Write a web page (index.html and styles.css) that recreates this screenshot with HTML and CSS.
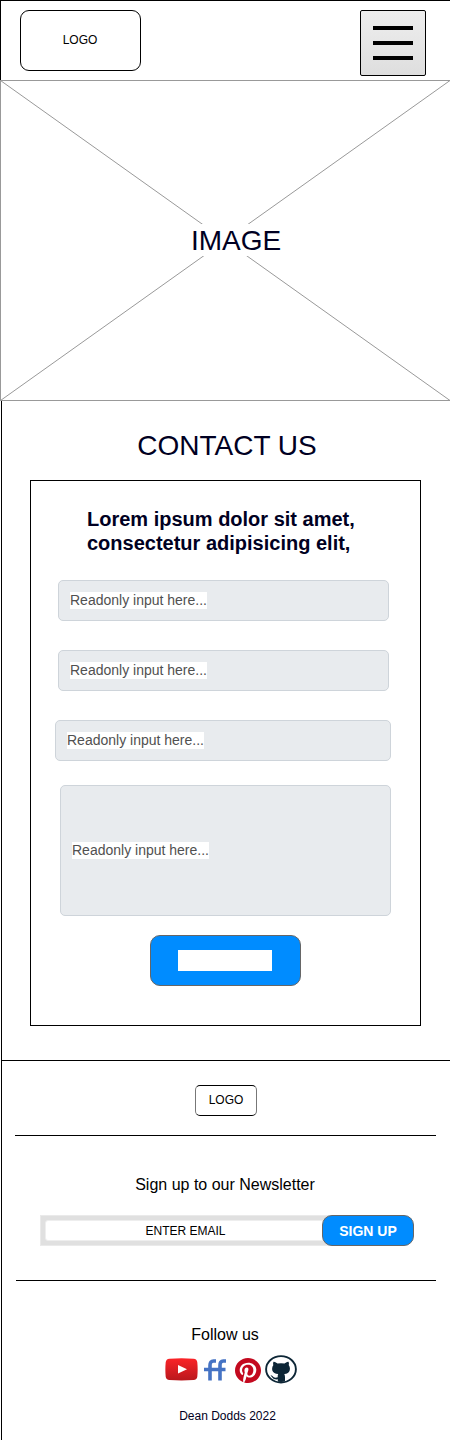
FILE: index.html
```html
<!DOCTYPE html>
<html lang="en">
<head>
<meta charset="utf-8">
<title>Contact us</title>
<link rel="stylesheet" href="styles.css">
</head>
<body>
<header class="header">
  <div class="logo">LOGO</div>
  <button class="menu" aria-label="Menu"><span class="bar"></span><span class="bar"></span><span class="bar"></span></button>
</header>
<section class="hero">
  <svg class="hero-lines" viewBox="0 0 450 321"><path d="M.5 .5 450 320.5M450 .5 .5 320.5" fill="none" stroke="#999"/></svg>
  <span class="hero-label">IMAGE</span>
</section>
<main class="main">
  <h1 class="title">CONTACT US</h1>
  <form class="card">
    <h2 class="lead">Lorem ipsum dolor sit amet,<br>consectetur adipisicing elit,</h2>
    <div class="field"><span class="hint">Readonly input here...</span></div>
    <div class="field"><span class="hint">Readonly input here...</span></div>
    <div class="field field-wide"><span class="hint">Readonly input here...</span></div>
    <div class="field field-tall"><span class="hint">Readonly input here...</span></div>
    <button type="button" class="submit" aria-label="Submit"><span class="submit-label"></span></button>
  </form>
</main>
<footer class="footer">
  <div class="footer-logo">LOGO</div>
  <hr class="rule">
  <p class="newsletter">Sign up to our Newsletter</p>
  <div class="signup">
    <div class="email"><span class="email-inner">ENTER EMAIL</span></div>
    <button type="button" class="signup-btn">SIGN UP</button>
  </div>
  <hr class="rule rule-second">
  <p class="follow">Follow us</p>
  <div class="social">
    <svg class="youtube" width="33" height="23" viewBox="0 0 33 24" preserveAspectRatio="none">
      <defs><linearGradient id="red" x2="0" y2="1"><stop stop-color="#fb2428"/><stop offset="1" stop-color="#b9171d"/></linearGradient></defs>
      <path d="M4.500.7Q16.500 -.3 28.500.7Q32 1 32.300 4.500Q33 12 32.300 19.500Q32 22.500 28.500 22.900Q16.500 23.800 4.500 22.900Q1 22.500.700 19.500Q0 12 .700 4.500Q1 1 4.500.700Z" fill="url(#red)"/>
      <path d="M13 7.200 22 11.800 13 16.200Z" fill="#fff"/>
    </svg>
    <svg class="friendfeed" width="22" height="22" viewBox="0 0 22 22">
      <path d="M6 21.500V6.300Q6 2 9.500 2H12M16 21.500V6.300Q16 2 19.200 2H22M0 10.500H21.500" fill="none" stroke="#4573c4" stroke-width="3.600"/>
    </svg>
    <svg class="pinterest" width="26" height="25" viewBox="0 0 24 24" preserveAspectRatio="none">
      <circle cx="12" cy="12" r="11.500" fill="#fff"/>
      <path d="M12 0C5.370 0 0 5.370 0 12c0 5.080 3.160 9.430 7.630 11.180-.1-.95-.2-2.400.04-3.440.22-.94 1.400-5.960 1.400-5.960s-.36-.72-.36-1.780c0-1.660.97-2.910 2.170-2.910 1.020 0 1.520.77 1.520 1.690 0 1.030-.66 2.570-1 3.990-.28 1.190.6 2.170 1.780 2.170 2.130 0 3.770-2.250 3.770-5.500 0-2.870-2.060-4.880-5.010-4.880-3.410 0-5.410 2.560-5.410 5.200 0 1.030.4 2.130.89 2.730.1.120.11.220.08.340l-.33 1.360c-.05.220-.17.270-.4.160-1.500-.7-2.430-2.890-2.430-4.650 0-3.780 2.750-7.260 7.930-7.260 4.160 0 7.400 2.970 7.400 6.930 0 4.140-2.610 7.460-6.230 7.460-1.220 0-2.360-.63-2.750-1.380l-.75 2.850c-.27 1.040-1 2.350-1.490 3.150C9.570 23.810 10.760 24 12 24c6.630 0 12-5.370 12-12S18.630 0 12 0Z" fill="#c3091f"/>
    </svg>
    <svg class="github" width="32" height="29" viewBox="0 0 32 29">
      <clipPath id="disc"><ellipse cx="16" cy="14.300" rx="14.500" ry="12.800"/></clipPath>
      <ellipse cx="16" cy="14.300" rx="14.900" ry="13.200" fill="#fff" stroke="#0d2636" stroke-width="1.900"/>
      <path clip-path="url(#disc)" d="M8.500 6.800Q9.500 6.200 12.500 8.500Q16 7.800 19.500 8.500Q22.500 6.200 23.500 6.800Q24.300 8.800 23.700 10Q25.600 12.500 24.600 15.800Q23.700 18.800 19.300 19.100Q20 20.500 20 22V29H12.800V24.300Q8.600 24.800 7 22.200L5.500 20.300Q7 20 8.500 22Q10 23.100 12.800 22.300Q12.500 20.600 13.200 19.100Q8.500 18.800 7.400 15.800Q6.500 12.500 8.400 10Q7.700 8.800 8.500 6.800Z" fill="#0d2636"/>
    </svg>
  </div>
  <p class="credit">Dean Dodds 2022</p>
</footer>
</body>
</html>
```
FILE: styles.css
```css
* { box-sizing: border-box; }
body {
  margin: 0;
  width: 450px;
  height: 1440px;
  overflow: hidden;
  background: #fff;
  color: #000;
  font: 12px/14px "Liberation Sans", Arial, sans-serif;
}
h1, h2, p { margin: 0; font-weight: normal; }
button { font-family: inherit; padding: 0; }

.header {
  display: flex;
  justify-content: space-between;
  height: 80px;
  padding: 9px 24px 0 19px;
  border-top: 1px solid #000;
  border-left: 1px solid #000;
}
.logo {
  display: flex;
  align-items: center;
  justify-content: center;
  width: 121px;
  height: 61px;
  padding: 0 1px 2px 0;
  border: 1px solid #000;
  border-radius: 9px;
}
.menu {
  display: flex;
  flex-direction: column;
  align-items: center;
  gap: 11px;
  width: 66px;
  height: 66px;
  padding-top: 15px;
  border: 1px solid #000;
  border-radius: 2px;
  background: linear-gradient(#eee, #dedede);
}
.bar { width: 40px; height: 4px; background: #000; }

.hero {
  position: relative;
  display: flex;
  justify-content: center;
  height: 321px;
  padding: 143px 0 0 21px;
  border: 1px solid #999;
  border-right: 0;
}
.hero-lines { position: absolute; left: -1px; top: -1px; width: 450px; height: 321px; }
.hero-label {
  position: relative;
  height: 32px;
  background: #fff;
  color: #000022;
  font-size: 28px;
  line-height: 34px;
}

.main {
  height: 659px;
  margin-left: 1px;
  padding: 28px 29px 0 28px;
  border-left: 1px solid #000;
}
.title {
  height: 32px;
  margin-bottom: 19px;
  padding-left: 3px;
  color: #000022;
  font-size: 28px;
  line-height: 34px;
  text-align: center;
}
.card {
  display: flex;
  flex-direction: column;
  width: 391px;
  height: 546px;
  padding: 26px 27px 0;
  border: 1px solid #000;
}
.lead {
  margin: 0 0 25px 29px;
  color: #000022;
  font-size: 20px;
  font-weight: bold;
  line-height: 24px;
}
.field {
  display: flex;
  flex: none;
  align-items: center;
  width: 331px;
  height: 41px;
  margin-bottom: 29px;
  padding-left: 11px;
  border: 1px solid #ced4da;
  border-radius: 5px;
  background: #e8ebee;
}
.field-wide { width: 336px; margin: 0 0 24px -3px; }
.field-tall { height: 131px; margin: 0 0 19px 2px; }
.hint {
  height: 17px;
  background: #fff;
  color: #505050;
  font-size: 14px;
  line-height: 17px;
}
.submit {
  width: 151px;
  height: 51px;
  margin-left: 92px;
  padding: 14px 28px 14px 27px;
  border: 1px solid #666;
  border-radius: 10px;
  background: #008cff;
}
.submit-label { display: block; width: 94px; height: 21px; background: #fff; }

.footer {
  display: flex;
  flex-direction: column;
  height: 380px;
  margin-left: 1px;
  padding: 24px 14px 0 13px;
  border-top: 1px solid #000;
  border-left: 1px solid #000;
}
.footer-logo {
  flex: none;
  width: 62px;
  height: 31px;
  margin: 0 0 19px 180px;
  border: 1px solid #000;
  border-right-color: #777;
  border-left-color: #777;
  border-radius: 5px;
  line-height: 29px;
  text-align: center;
}
.rule { flex: none; width: 421px; height: 1px; margin: 0; border: 0; background: #000; }
.newsletter { margin: 39px 0 21px; padding-right: 1px; font-size: 16px; line-height: 19px; text-align: center; }
.signup { display: flex; height: 31px; padding-left: 25px; }
.email {
  width: 291px;
  height: 31px;
  padding: 5px;
  border: 1px solid #eaeaea;
  background: #e0e0e0;
}
.email-inner {
  display: block;
  width: 280px;
  height: 21px;
  margin-top: -1px;
  margin-left: -1px;
  padding-left: 1px;
  border: 1px solid #eee;
  border-radius: 3px;
  background: #fff;
  line-height: 21px;
  text-align: center;
}
.signup-btn {
  width: 92px;
  height: 31px;
  margin-left: -9px;
  border: 1px solid #666;
  border-radius: 10px;
  background: #008cff;
  color: #fff;
  font-size: 14px;
  font-weight: bold;
}
.rule-second { width: 420px; margin: 34px 0 0 1px; }
.follow { margin: 44px 0 11px; padding-right: 1px; font-size: 16px; line-height: 19px; text-align: center; }
.social { display: flex; height: 30px; padding-left: 150px; }
.social svg { flex: none; }
.youtube { margin-top: 3px; }
.friendfeed { margin: 4px 9px 0 6px; }
.pinterest { margin-top: 3px; }
.github { margin-left: 4px; }
.credit { margin-top: 24px; padding-left: 4px; color: #000022; text-align: center; }
```
